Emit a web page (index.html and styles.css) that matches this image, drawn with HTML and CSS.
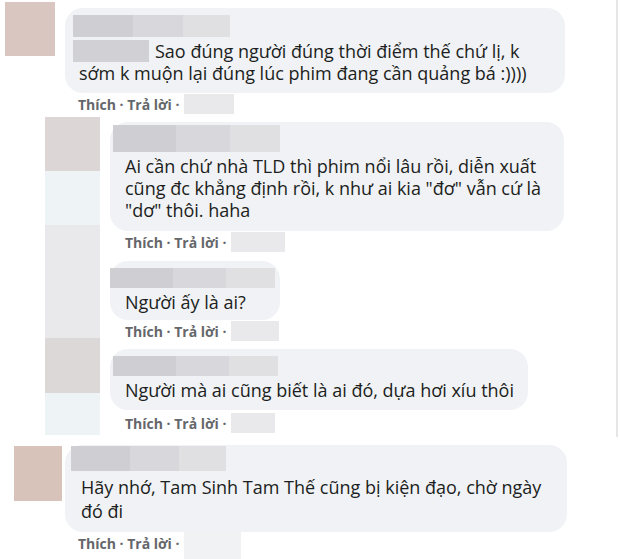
FILE: index.html
```html
<!DOCTYPE html>
<html lang="vi">
<head>
    <meta charset="UTF-8">
    <meta name="viewport" content="width=device-width, initial-scale=1.0">
    <title>Bình luận</title>
    <link rel="stylesheet" href="styles.css">
</head>
<body>

    <div class="thread">
        <!-- Top comment -->
        <div class="comment top-comment">
            <div class="avatar avatar-main"></div>
            <div class="comment-body">
                <div class="bubble bubble-wide">
                    <div class="name-blur name-1"></div>
                    <p class="text"><span class="tag-blur"></span>Sao đúng người đúng thời điểm thế chứ lị, k sớm k muộn lại đúng lúc phim đang cần quảng bá :))))</p>
                </div>
                <div class="actions">
                    <span>Thích · Trả lời ·</span>
                    <span class="time-blur time-1"></span>
                </div>
            </div>
        </div>

        <!-- Replies -->
        <div class="replies">
            <div class="avatar-strip">
                <div class="strip s1"></div>
                <div class="strip s2"></div>
                <div class="strip s3"></div>
                <div class="strip s4"></div>
                <div class="strip s5"></div>
            </div>
            <div class="reply-list">
                <div class="reply">
                    <div class="bubble bubble-r1">
                        <div class="name-blur name-2"></div>
                        <p class="text">Ai cần chứ nhà TLD thì phim nổi lâu rồi, diễn xuất cũng đc khẳng định rồi, k như ai kia "đơ" vẫn cứ là "dơ" thôi. haha</p>
                    </div>
                    <div class="actions">
                        <span>Thích · Trả lời ·</span>
                        <span class="time-blur time-2"></span>
                    </div>
                </div>
                <div class="reply">
                    <div class="bubble bubble-r2">
                        <div class="name-blur name-3"></div>
                        <p class="text">Người ấy là ai?</p>
                    </div>
                    <div class="actions">
                        <span>Thích · Trả lời ·</span>
                        <span class="time-blur time-3"></span>
                    </div>
                </div>
                <div class="reply">
                    <div class="bubble bubble-r3">
                        <div class="name-blur name-4"></div>
                        <p class="text">Người mà ai cũng biết là ai đó, dựa hơi xíu thôi</p>
                    </div>
                    <div class="actions">
                        <span>Thích · Trả lời ·</span>
                        <span class="time-blur time-4"></span>
                    </div>
                </div>
            </div>
        </div>
    </div>

    <!-- Last comment -->
    <div class="comment last-comment">
        <div class="avatar avatar-last"></div>
        <div class="comment-body">
            <div class="bubble bubble-last">
                <div class="name-blur name-5"></div>
                <p class="text">Hãy nhớ, Tam Sinh Tam Thế cũng bị kiện đạo, chờ ngày<br>đó đi</p>
            </div>
            <div class="actions">
                <span>Thích · Trả lời ·</span>
                <span class="time-blur time-5"></span>
            </div>
        </div>
    </div>

</body>
</html>
```

FILE: styles.css
```css
body {
    margin: 0;
    background: #fff;
    font-family: "Open Sans", "Noto Sans", Arial, sans-serif;
    color: #1c1e21;
    width: 620px;
    height: 559px;
    overflow: hidden;
}

.thread {
    width: 616px;
    border-right: 2px solid #e6e6e6;
    padding-bottom: 2px;
}

.comment {
    display: flex;
    gap: 10px;
}

.top-comment {
    padding: 2px 0 0 5px;
}

.last-comment {
    padding-left: 14px;
    margin-top: 8px;
    gap: 3px;
}

.avatar-main {
    width: 50px;
    height: 54px;
    background: #d9c6c0;
}

.avatar-last {
    width: 48px;
    height: 55px;
    margin-top: 1px;
    background: #d7c3ba;
}

.bubble {
    background: #f0f2f5;
    border-radius: 18px;
    padding: 7px 14px 9px 14px;
}

.bubble-wide {
    width: 472px;
    margin-top: 6px;
}

.bubble-last {
    width: 472px;
    padding-top: 1px;
    padding-left: 16px;
}

.text {
    margin: 3px 0 0;
    font-size: 18px;
    line-height: 22px;
}

.bubble-last .text {
    line-height: 24px;
    margin-top: 4px;
}

.name-blur {
    height: 22px;
    margin-left: -6px;
    background: linear-gradient(90deg, #cfcfd3 0 38%, #d8d8dc 38% 70%, #e0e0e3 70% 100%);
}

.name-1 { width: 157px; }
.name-2 { width: 167px; height: 27px; margin-left: -12px; }
.name-3 { width: 165px; height: 20px; margin-left: -15px; }
.name-4 { width: 165px; height: 20px; margin-left: -12px; margin-top: 4px; }
.name-5 { width: 155px; height: 25px; margin-left: -10px; }

.tag-blur {
    display: inline-block;
    width: 76px;
    height: 22px;
    vertical-align: top;
    margin-left: -6px;
    margin-right: 6px;
    background: #d1d1d5;
}

.actions {
    display: flex;
    align-items: center;
    gap: 4px;
    height: 22px;
    padding-left: 13px;
    font-size: 14px;
    font-weight: 700;
    color: #65676b;
}

.time-blur {
    display: block;
    height: 20px;
    background: #e9e9ec;
}

.time-1 { width: 50px; }
.time-2 { width: 54px; }
.time-3 { width: 48px; }
.time-4 { width: 44px; }
.time-5 { width: 57px; height: 34px; margin-top: 12px; background: #f1f2f4; }

.replies {
    display: flex;
    gap: 10px;
    padding: 2px 0 0 45px;
}

.avatar-strip {
    width: 55px;
    display: flex;
    flex-direction: column;
}

.strip { width: 55px; }
.s1 { height: 54px; background: #ddd6d6; }
.s2 { height: 54px; background: #eef3f6; }
.s3 { height: 113px; background: #e9e9eb; }
.s4 { height: 55px; background: #dcd8d8; }
.s5 { height: 42px; background: #eef3f6; }

.reply-list {
    display: flex;
    flex-direction: column;
    padding-top: 5px;
}

.reply {
    display: flex;
    flex-direction: column;
    align-items: flex-start;
}

.reply .bubble {
    padding-left: 15px;
    padding-top: 3px;
}

.reply .actions {
    padding-left: 15px;
}

.bubble-r1 {
    width: 425px;
    padding-bottom: 10px;
}

.bubble-r2 {
    margin-top: 8px;
    padding-right: 5px;
    padding-bottom: 7px;
}

.bubble-r2 .name-blur,
.bubble-r3 .name-blur {
    margin-top: 4px;
}

.bubble-r3 {
    margin-top: 7px;
    padding-right: 14px;
}

.bubble-r3 + .actions {
    margin-top: 2px;
}
```
